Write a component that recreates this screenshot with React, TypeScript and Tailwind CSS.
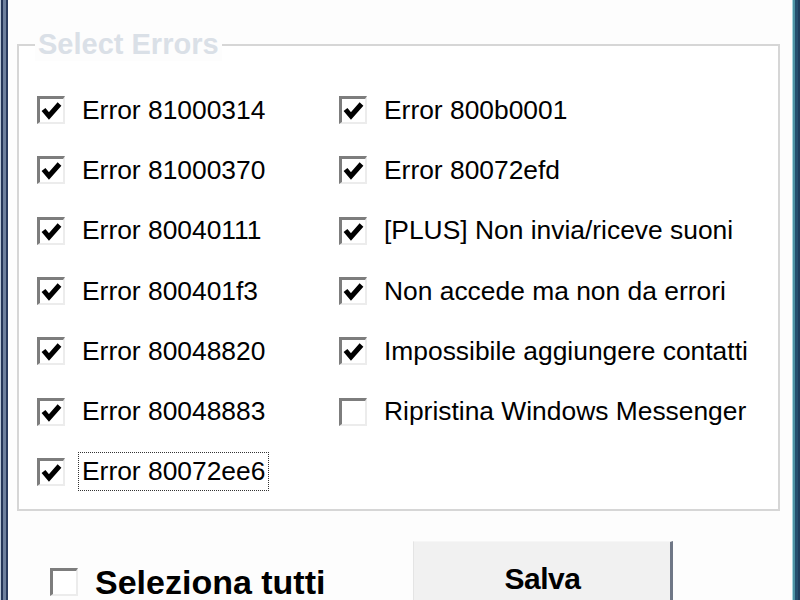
import React from 'react';

type Item = { label: string; checked: boolean; focused?: boolean };

const leftItems: Item[] = [
    { label: 'Error 81000314', checked: true },
    { label: 'Error 81000370', checked: true },
    { label: 'Error 80040111', checked: true },
    { label: 'Error 800401f3', checked: true },
    { label: 'Error 80048820', checked: true },
    { label: 'Error 80048883', checked: true },
    { label: 'Error 80072ee6', checked: true, focused: true },
];

const rightItems: Item[] = [
    { label: 'Error 800b0001', checked: true },
    { label: 'Error 80072efd', checked: true },
    { label: '[PLUS] Non invia/riceve suoni', checked: true },
    { label: 'Non accede ma non da errori', checked: true },
    { label: 'Impossibile aggiungere contatti', checked: true },
    { label: 'Ripristina Windows Messenger', checked: false },
];

const CheckBox: React.FC<{ checked: boolean }> = ({ checked }) => (
    <div className="w-[28px] h-[28px] shrink-0 bg-white border-t-[3px] border-l-[3px] border-r-2 border-b-2 border-t-[#7d7d7d] border-l-[#7d7d7d] border-r-[#ececec] border-b-[#ececec] flex items-center justify-center">
        {checked && (
            <svg width="21" height="19" viewBox="0 0 21 19">
                <polyline points="2.5,8.5 8,15 18.5,3" fill="none" stroke="#000" strokeWidth="5" strokeLinejoin="miter" />
            </svg>
        )}
    </div>
);

const Row: React.FC<{ item: Item }> = ({ item }) => (
    <div className="h-[60.3px] flex items-center gap-[13px]">
        <CheckBox checked={item.checked} />
        <span
            className={
                'px-[3px] py-[3px] leading-[31px] whitespace-nowrap border ' +
                (item.focused ? 'border-dotted border-[#333]' : 'border-transparent')
            }
        >
            {item.label}
        </span>
    </div>
);

export default function App() {
    return (
        <div
            className="w-[800px] h-[600px] overflow-hidden flex bg-[#fdfdfd] text-black"
            style={{ fontFamily: '"Liberation Sans", Arial, sans-serif' }}
        >
            {/* window frame left */}
            <div className="flex shrink-0">
                <div className="w-[1px] bg-[#b9c6d6]" />
                <div className="w-[2px] bg-[#26375a]" />
                <div className="w-[3px] bg-[#6f819e]" />
                <div className="w-[2px] bg-[#2b3c5f]" />
            </div>

            <div className="flex-1 flex flex-col pl-[9px] pr-[12px]">
                {/* group box */}
                <div className="relative shrink-0 mt-[44px] h-[467px] border-2 border-[#d6d6d6] bg-white pt-[34px] pl-[18px]">
                    <div className="absolute -top-[19px] left-[16px] bg-[#fdfdfd] px-[3px] text-[29px] leading-[34px] font-bold text-[#dae0e7]">
                        Select Errors
                    </div>
                    <div className="flex text-[26.4px]">
                        <div className="w-[302px] flex flex-col">
                            {leftItems.map((it) => (
                                <Row key={it.label} item={it} />
                            ))}
                        </div>
                        <div className="flex flex-col">
                            {rightItems.map((it) => (
                                <Row key={it.label} item={it} />
                            ))}
                        </div>
                    </div>
                </div>

                {/* bottom */}
                <div className="flex shrink-0 items-start mt-[30px]">
                    <div className="flex items-center gap-[17px] ml-[33px] mt-[24px]">
                        <CheckBox checked={false} />
                        <span className="text-[34px] leading-[34px] font-bold whitespace-nowrap">Seleziona tutti</span>
                    </div>
                    <button className="ml-[88px] w-[260px] h-[70px] shrink-0 bg-[#f1f1f1] border-l border-t border-l-[#e4e4e4] border-t-[#f6f6f6] border-r-[3px] border-r-[#6f7786] flex justify-center pt-[21px] text-[30px] leading-[32px] font-bold tracking-[-0.5px]">
                        Salva
                    </button>
                </div>
            </div>

            {/* window frame right */}
            <div className="flex shrink-0">
                <div className="w-[1px] bg-[#a6d4df]" />
                <div className="w-[2px] bg-[#4b92a3]" />
                <div className="w-[3px] bg-[#24506f]" />
                <div className="w-[2px] bg-[#1d3d5d]" />
            </div>
        </div>
    );
}
